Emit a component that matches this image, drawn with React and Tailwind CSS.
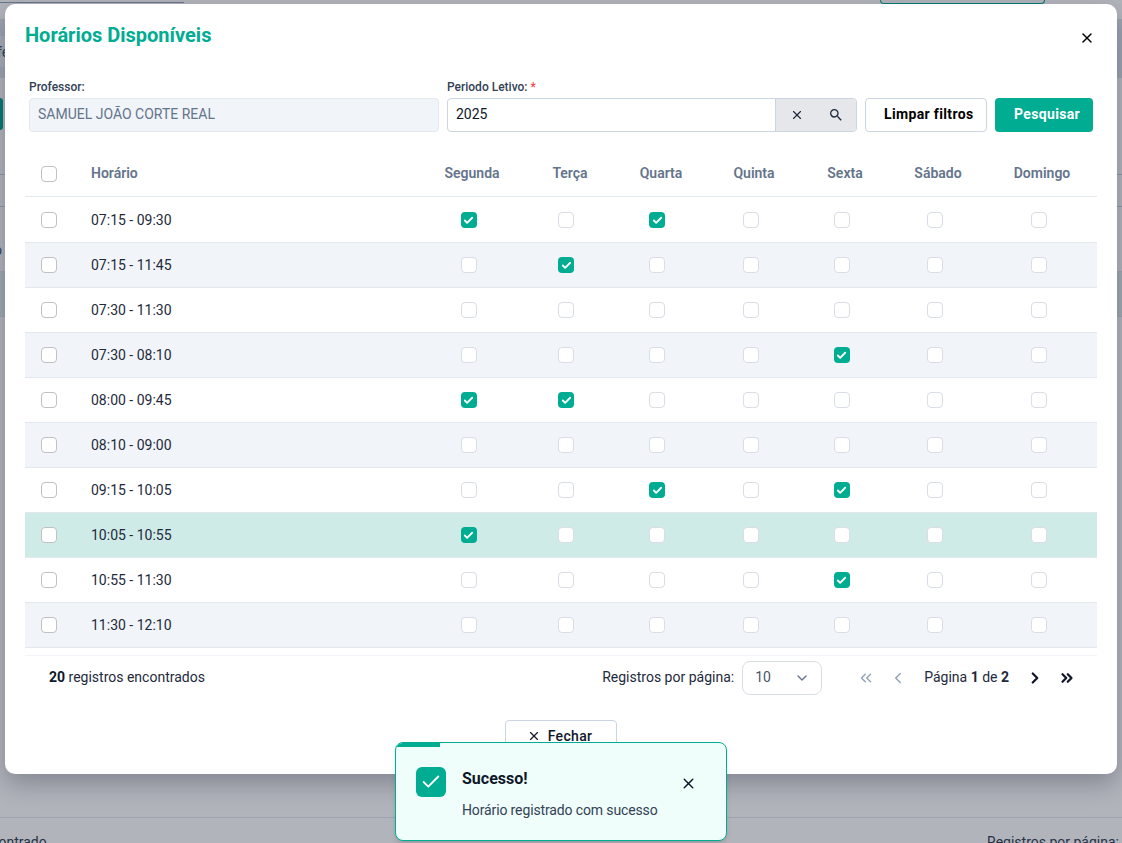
import React from "react";
import { X, Check, ChevronDown, ChevronLeft, ChevronRight, ChevronsLeft, ChevronsRight } from "lucide-react";

const GRID = "grid grid-cols-[66px_328px_106px_90px_92px_94px_88px_98px_110px] items-center";
const DAYS = ["Segunda", "Terça", "Quarta", "Quinta", "Sexta", "Sábado", "Domingo"];
// the checkboxes sit a little left of the header text
const DAY_PAD = ["pr-[7px]", "pr-2", "pr-2", "pr-[7px]", "pr-[7px]", "pr-[7px]", "pr-[7px]"];

const ROWS = [
  { time: "07:15 - 09:30", on: [0, 2] },
  { time: "07:15 - 11:45", on: [1] },
  { time: "07:30 - 11:30", on: [] },
  { time: "07:30 - 08:10", on: [4] },
  { time: "08:00 - 09:45", on: [0, 1] },
  { time: "08:10 - 09:00", on: [] },
  { time: "09:15 - 10:05", on: [2, 4] },
  { time: "10:05 - 10:55", on: [0], active: true },
  { time: "10:55 - 11:30", on: [4] },
  { time: "11:30 - 12:10", on: [] },
];

function RowCheck() {
  return <div className="w-4 h-4 rounded bg-white border-[1.5px] border-[#bfc1c5]" />;
}

function DayCheck({ checked }) {
  if (checked) {
    return (
      <div className="w-4 h-4 rounded bg-[#00ac92] flex items-center justify-center">
        <Check size={11} strokeWidth={4} className="text-white" />
      </div>
    );
  }
  return <div className="w-4 h-4 rounded bg-white border-[1.5px] border-[#d9dde5]" />;
}

function SearchIcon() {
  return (
    <svg width="16" height="16" viewBox="0 0 24 24" fill="currentColor" className="ml-6">
      <path d="M15.5 14h-.79l-.28-.27A6.471 6.471 0 0 0 16 9.5 6.5 6.5 0 1 0 9.5 16c1.61 0 3.09-.59 4.23-1.57l.27.28v.79l5 4.99L20.49 19l-4.99-5zm-6 0C7.01 14 5 11.99 5 9.5S7.01 5 9.5 5 14 7.01 14 9.5 11.99 14 9.5 14z" />
    </svg>
  );
}

function PageBehind() {
  return (
    <div className="h-full flex flex-col bg-white text-sm text-[#334155]">
      <div className="h-[19px] flex justify-between items-start shrink-0">
        <div className="w-[184px] h-px mt-0.5 bg-[#94a3b8]" />
        <div className="w-[165px] h-1 mr-[77px] border border-t-0 border-[#00ac92] rounded-b" />
      </div>
      <div className="h-[59px] shrink-0 bg-[#e2e8f0] py-[17px]">
        <div className="w-[300px] h-[31px] bg-[#f1f5f9] flex items-center -ml-[3px] text-[#475569]">fe</div>
      </div>
      <div className="mt-5 w-[3px] h-8 rounded-r bg-[#00ac92] shrink-0" />
      <div className="mt-[44px] h-[33px] shrink-0 border-y border-[#cbd5e1]" />
      <div className="h-[64px] shrink-0 pt-[33px] -ml-[6px] text-[#475569]">o</div>
      <div className="h-[46px] shrink-0 bg-[#e6f0f2] border-y border-[#e2e8f0]" />
      <div className="mt-[500px] flex justify-between shrink-0 border-t border-[#e2e8f0] pt-[14px] -ml-6 pr-[3px]">
        <span>encontrado</span>
        <span>Registros por página:</span>
      </div>
    </div>
  );
}

export default function App() {
  return (
    <div className="relative h-[843px] w-full overflow-hidden font-['Roboto',sans-serif]">
      <PageBehind />
      <div className="absolute inset-0 bg-[#0f172a]/[.32]" />

      <div className="absolute left-[5px] top-1 w-[1112px] h-[770px] rounded-[10px] bg-white px-5 shadow-[0_10px_24px_rgba(15,23,42,0.28)]">
        <div className="h-[76px] flex justify-between items-start">
          <h2 className="mt-[17px] text-xl leading-7 font-bold text-[#00ac92]">Horários Disponíveis</h2>
          <button className="mt-[26px] mr-0.5 text-black">
            <X size={16} strokeWidth={2.2} />
          </button>
        </div>

        <div className="flex items-end gap-2 px-1">
          <div className="w-[410px]">
            <label className="block text-xs leading-[14px] font-medium text-[#334155] mb-1">Professor:</label>
            <div className="h-[34px] flex items-center px-2 pb-[2px] rounded bg-[#f1f5f9] border border-[#e2e8f0] text-sm text-[#64748b]">
              SAMUEL JOÃO CORTE REAL
            </div>
          </div>
          <div className="w-[410px]">
            <label className="block text-xs leading-[14px] font-medium text-[#334155] mb-1">
              Periodo Letivo: <span className="text-[#ef4444]">*</span>
            </label>
            <div className="h-[34px] flex rounded border border-[#cbd5e1] overflow-hidden">
              <div className="flex-1 flex items-center pl-2 pb-[2px] text-sm text-[#0f172a]">2025</div>
              <div className="w-[81px] flex items-center bg-[#e5e7eb] border-l border-[#cbd5e1] text-[#1e293b]">
                <X size={14} strokeWidth={2} className="ml-[14px]" />
                <SearchIcon />
              </div>
            </div>
          </div>
          <button className="w-[122px] h-[34px] pl-[18px] pb-[2px] text-left rounded border border-[#cbd5e1] bg-white text-sm font-bold tracking-[0.35px] text-black">
            Limpar filtros
          </button>
          <button className="w-[98px] h-[34px] pl-[19px] pb-[2px] text-left rounded bg-[#00ac92] text-sm font-bold tracking-[0.35px] text-white">
            Pesquisar
          </button>
        </div>

        <div className={`${GRID} mt-[18px] h-[47px] border-b border-[#e2e8f0] text-sm font-semibold text-[#64748b]`}>
          <div className="pl-4 pt-[2px]"><RowCheck /></div>
          <div>Horário</div>
          {DAYS.map((d) => (
            <div key={d} className="text-center">{d}</div>
          ))}
        </div>

        <div className="mt-px text-sm text-[#1e293b]">
          {ROWS.map((row, i) => (
            <div
              key={row.time}
              className={`${GRID} h-[45px] border-b border-[#e2e8f0] ${row.active ? "bg-[#cfebe8]" : i % 2 === 1 ? "bg-[#f1f5f9]" : "bg-white"}`}
            >
              <div className="pl-4"><RowCheck /></div>
              <div>{row.time}</div>
              {DAYS.map((d, n) => (
                <div key={d} className={`flex justify-center ${DAY_PAD[n]}`}>
                  <DayCheck checked={row.on.includes(n)} />
                </div>
              ))}
            </div>
          ))}
        </div>

        <div className="mt-[7px] border-t border-[#f1f5f9] pt-[5px] pl-6 pr-[21px] flex items-center justify-between text-sm text-[#1e293b]">
          <div className="mb-[2px]"><b className="text-[#0f172a]">20</b> registros encontrados</div>
          <div className="flex items-center">
            <span className="mb-[2px]">Registros por página:</span>
            <div className="ml-2 w-20 h-[34px] pl-3 pr-[11px] flex items-center justify-between rounded-lg border border-[#d8dce4] text-[#475569]">
              <span className="mb-[2px]">10</span>
              <ChevronDown size={16} strokeWidth={2} className="text-[#64748b]" />
            </div>
            <ChevronsLeft size={18} strokeWidth={2} className="ml-[35px] text-[#94a3b8]" />
            <ChevronLeft size={18} strokeWidth={2} className="ml-[14px] text-[#94a3b8]" />
            <span className="ml-[17px] mb-[2px]">Página <b>1</b> de <b>2</b></span>
            <ChevronRight size={18} strokeWidth={3} className="ml-[17px] text-[#0f172a]" />
            <ChevronsRight size={18} strokeWidth={3} className="ml-[14px] text-[#0f172a]" />
          </div>
        </div>

        <div className="mt-[25px] flex justify-center">
          <button className="w-28 h-8 pr-[3px] flex items-center justify-center gap-[7px] rounded border border-[#cbd5e1] bg-white text-sm font-medium tracking-[0.35px] text-[#0f172a]">
            <X size={14} strokeWidth={2} />
            Fechar
          </button>
        </div>
      </div>

      <div className="absolute left-[395px] top-[742px] w-[332px] h-[99px] overflow-hidden rounded-lg border border-[#00ac92] bg-[#effefb] shadow-md">
        <div className="absolute left-0 top-0 w-11 h-1 bg-[#00ac92]" />
        <div className="flex items-start pl-5 pt-6">
          <div className="w-[30px] h-[30px] shrink-0 rounded-md bg-[#00ac92] flex items-center justify-center">
            <Check size={22} strokeWidth={2} className="text-white" />
          </div>
          <div className="ml-4 flex-1">
            <div className="text-base leading-6 font-bold text-[#0f172a]">Sucesso!</div>
            <div className="mt-[9px] text-sm leading-5 tracking-[-0.13px] text-[#334155]">Horário registrado com sucesso</div>
          </div>
          <X size={17} strokeWidth={2} className="mt-2 mr-[29px] text-[#0f172a]" />
        </div>
      </div>
    </div>
  );
}
